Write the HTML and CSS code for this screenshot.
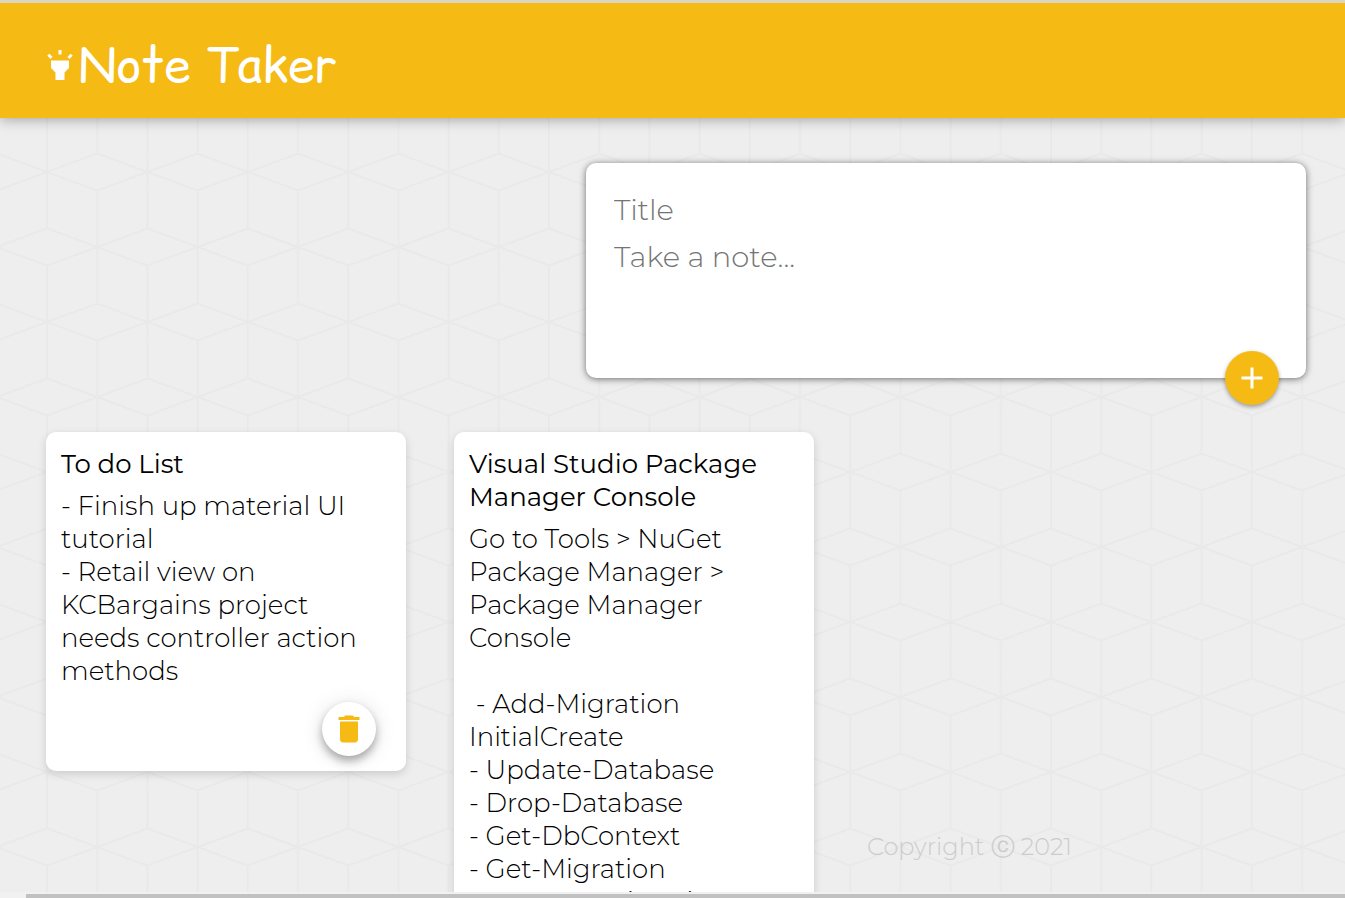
FILE: index.html
```html
<!DOCTYPE html>
<html lang="en">
<head>
<meta charset="utf-8">
<title>Note Taker</title>
<meta name="viewport" content="width=device-width, initial-scale=1">
<link rel="stylesheet" href="styles.css">
</head>
<body class="page">
<header class="header">
  <h1 class="brand">
    <svg class="icon" viewBox="0 0 24 24" aria-hidden="true"><path d="M6 14l3 3v5h6v-5l3-3V9H6zm5-12h2v3h-2zM3.5 5.875L4.914 4.46l2.12 2.122L5.62 7.997zm13.46.71l2.123-2.12 1.414 1.414L18.375 8z"/></svg>
    <span>Note Taker</span>
  </h1>
</header>
<main class="main">
  <form class="create-note">
    <input class="field" type="text" name="title" placeholder="Title" aria-label="Title">
    <textarea class="field" name="content" rows="3" placeholder="Take a note..." aria-label="Take a note"></textarea>
    <button class="fab fab-add" type="button" aria-label="Add note">
      <svg class="icon" viewBox="0 0 24 24" aria-hidden="true"><path d="M19 13h-6v6h-2v-6H5v-2h6V5h2v6h6v2z"/></svg>
    </button>
  </form>
  <div class="board">
    <article class="note">
      <h2 class="note-title">To do List</h2>
      <p class="note-text">- Finish up material UI tutorial
- Retail view on KCBargains project needs controller action methods</p>
      <button class="fab fab-delete" type="button" aria-label="Delete note">
        <svg class="icon" viewBox="0 0 24 24" aria-hidden="true"><path d="M6 19c0 1.1.9 2 2 2h8c1.1 0 2-.9 2-2V7H6v12zM19 4h-3.500l-1-1h-5l-1 1H5v2h14V4z"/></svg>
      </button>
    </article>
    <article class="note">
      <h2 class="note-title">Visual Studio Package Manager Console</h2>
      <p class="note-text">Go to Tools &gt; NuGet Package Manager &gt; Package Manager Console

 - Add-Migration InitialCreate
- Update-Database
- Drop-Database
- Get-DbContext
- Get-Migration
- Remove-Migration</p>
    </article>
    <footer class="footer">Copyright ⓒ 2021</footer>
  </div>
</main>
<div class="scroll-track" aria-hidden="true"><div class="scroll-thumb"></div></div>
</body>
</html>
```

FILE: styles.css
```css
* {
  box-sizing: border-box;
}

.page {
  margin: 0;
  height: 100vh;
  overflow: hidden;
  display: flex;
  flex-direction: column;
  font-family: Montserrat, Inter, "DejaVu Sans", sans-serif;
  font-weight: 300;
  background-color: #eee;
  background-image: url("data:image/svg+xml,%3Csvg xmlns='http://www.w3.org/2000/svg' width='502' height='150' viewBox='0 0 500 150' preserveAspectRatio='none'%3E%3Cdefs%3E%3Cpattern id='p' width='100' height='150' patternUnits='userSpaceOnUse'%3E%3Cpath d='M0 0L50 18.5L100 0M0 150L50 131.5L100 150M50 18.5V131.500M0 0V56.5L50 75L0 93.500V150M100 0V56.5L50 75L100 93.500V150' fill='none' stroke='%23e9e9e9' stroke-width='2'/%3E%3C/pattern%3E%3C/defs%3E%3Crect width='500' height='150' fill='url(%23p)'/%3E%3C/svg%3E");
  background-position: 47px 22px;
}

.header {
  flex: none;
  height: 118px;
  padding: 8px 42px 0;
  display: flex;
  align-items: center;
  background: #f5ba13;
  border-top: 3px solid #dcd6c0;
  box-shadow: 0 2px 12px rgba(0, 0, 0, 0.3);
}

.brand {
  margin: 0;
  display: flex;
  align-items: center;
  color: #fff;
  font-family: "Comic Sans MS", "Comic Relief", "Comic Neue", McLaren, "DejaVu Sans", cursive;
  font-size: 48px;
  font-weight: 400;
  line-height: 64px;
}

.icon {
  display: block;
  width: 36px;
  height: 36px;
  fill: currentColor;
}

.main {
  flex: 1;
  min-height: 0;
  display: flex;
  flex-direction: column;
  padding: 45px 39px 0 46px;
}

.create-note {
  position: relative;
  flex: none;
  align-self: flex-end;
  width: 100%;
  max-width: 720px;
  margin-bottom: 54px;
  padding: 23px 28px 16px;
  display: flex;
  flex-direction: column;
  gap: 2px;
  background: #fff;
  border-radius: 10px;
  box-shadow: 0 1px 7px rgba(0, 0, 0, 0.55);
}

.field {
  width: 100%;
  padding: 6px 0;
  border: 0;
  outline: 0;
  resize: none;
  background: transparent;
  font: inherit;
  font-size: 29px;
  line-height: 34px;
}

.field[type="text"] {
  height: 46px;
}

textarea.field {
  height: 128px;
}

.field::placeholder {
  color: #757575;
  opacity: 1;
}

.fab {
  display: flex;
  align-items: center;
  justify-content: center;
  width: 54px;
  height: 54px;
  padding: 0;
  border: 0;
  border-radius: 50%;
}

.fab-add {
  position: absolute;
  right: 27px;
  bottom: -27px;
  background: #f5ba13;
  color: #fff;
  box-shadow: 0 2px 4px rgba(0, 0, 0, 0.35);
}

.fab-delete {
  margin: 14px 15px 0 auto;
  background: #fff;
  color: #f5ba13;
  box-shadow: 0 5px 8px rgba(0, 0, 0, 0.3), 0 2px 22px rgba(0, 0, 0, 0.12);
}

.board {
  flex: 1;
  min-height: 0;
  display: flex;
  align-items: flex-start;
  gap: 48px;
}

.note {
  flex: 0 1 360px;
  padding: 16px 15px 15px;
  background: #fff;
  border-radius: 10px;
  box-shadow: 0 3px 8px rgba(0, 0, 0, 0.15);
}

.note-title {
  margin: 0 0 9px;
  font-size: 26px;
  font-weight: 400;
  line-height: 33px;
}

.note-text {
  margin: 0;
  font-size: 26px;
  line-height: 33px;
  white-space: pre-wrap;
}

.footer {
  align-self: flex-end;
  padding: 0 0 29px 5px;
  color: #ccc;
  font-size: 24px;
  line-height: 32px;
}

.scroll-track {
  flex: none;
  position: relative;
  height: 6px;
  padding: 2px 0 0 26px;
  background: #f1f1f1;
}

.scroll-thumb {
  height: 4px;
  background: #c1c1c1;
}
```
